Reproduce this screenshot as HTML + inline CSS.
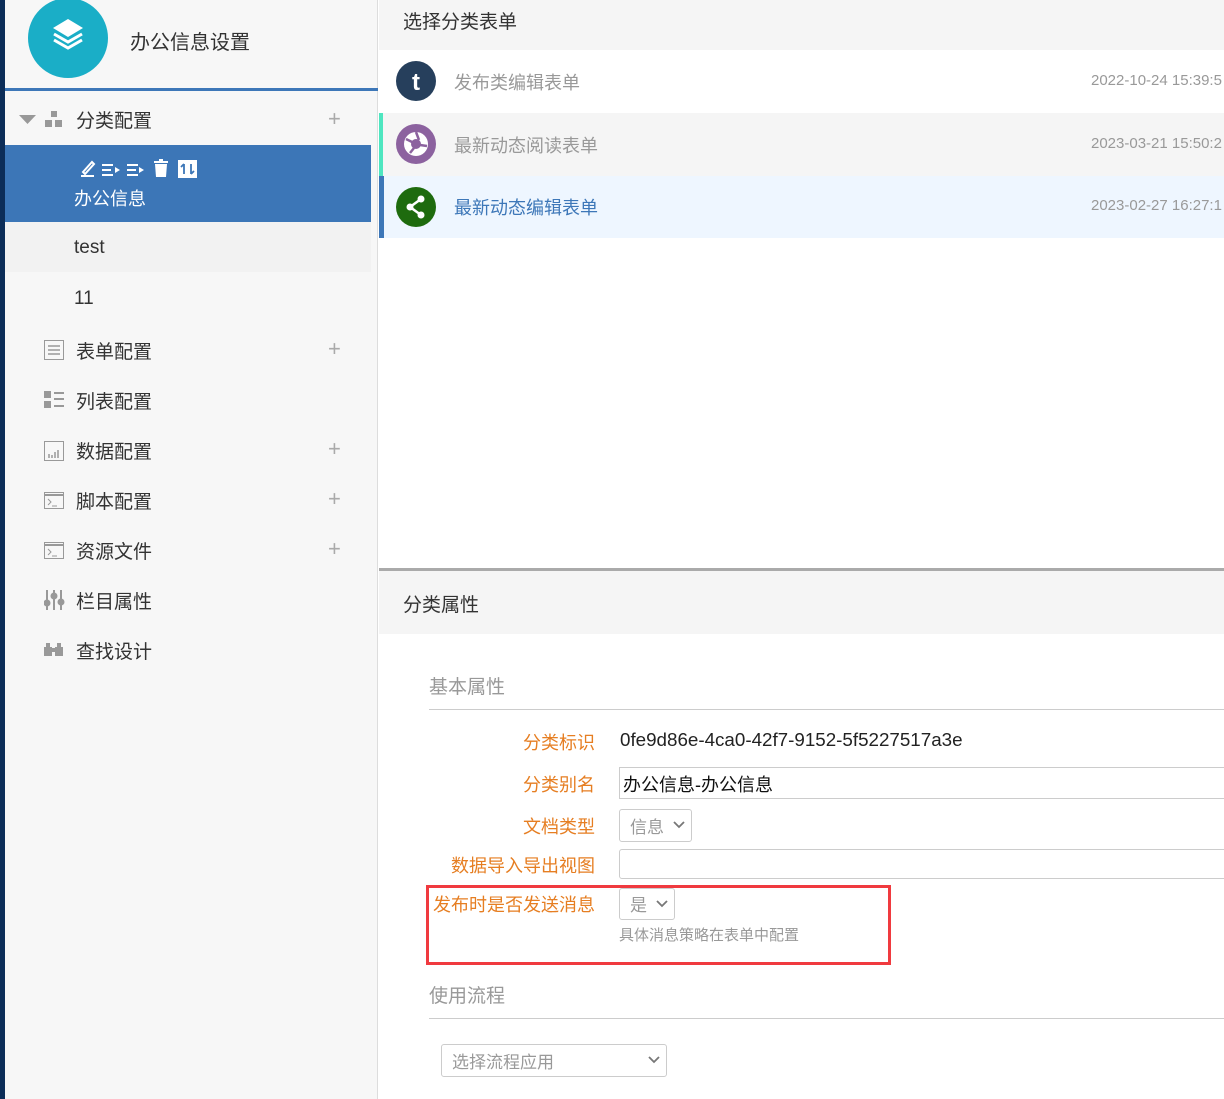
<!DOCTYPE html>
<html><head><meta charset="utf-8"><style>
*{margin:0;padding:0;box-sizing:border-box}
body{width:1224px;height:1099px;overflow:hidden;background:#fff;font-family:"Liberation Sans","Noto Sans CJK SC",sans-serif;position:relative;color:#333}
.a{position:absolute}
.side{left:5px;top:0;width:373px;height:1099px;background:#f7f7f7;border-right:1px solid #ddd}
.nav{left:0;top:0;width:5px;height:1099px;background:#0c2d58}
.it{position:absolute;left:76px;font-size:19px;color:#333}
.ic{position:absolute;left:44px}
.plus{position:absolute;left:328px;font-size:22px;color:#aaa;font-weight:300}
.lab{position:absolute;width:185px;left:410px;text-align:right;font-size:18px;color:#e67e22}
.box{position:absolute;border:1px solid #ccc;border-radius:3px;background:#fff}
</style></head><body>
<div class="a nav"></div>
<div class="a side"></div>
<svg class="a" style="left:28px;top:-2px" width="80" height="80"><circle cx="40" cy="40" r="40" fill="#1aaec7"/>
<path d="M40 21 L55 30 L40 39 L25 30Z" fill="#fff"/><path d="M26 36 L40 44 L54 36 M26 42 L40 50 L54 42" stroke="#fff" stroke-width="3" fill="none"/></svg>
<div class="a" style="left:130px;top:26px;font-size:20px;color:#333">办公信息设置</div>
<div class="a" style="left:5px;top:88px;width:373px;height:3px;background:#3d77b8"></div>
<svg class="a" style="left:19px;top:115px" width="18" height="10"><path d="M0 0 H17 L8.5 9Z" fill="#999"/></svg>
<svg class="a" style="left:45px;top:111px" width="19" height="18"><rect x="6" y="0" width="6" height="6" fill="#999"/><rect x="0" y="9" width="7" height="7" fill="#999"/><rect x="10" y="9" width="7" height="7" fill="#999"/></svg>
<div class="it" style="top:106px">分类配置</div><div class="plus" style="top:106px">+</div>
<div class="a" style="left:5px;top:145px;width:366px;height:77px;background:#3c76b7"></div>
<svg class="a" style="left:79px;top:157px" width="122" height="22" fill="#fff">
<path d="M2 19 H15 M4 15 L13 5 L15 7 L6 17 Z" stroke="#fff" stroke-width="2" fill="none"/>
<path d="M23 8h11M23 13h9M23 18h11" stroke="#fff" stroke-width="2"/><path d="M36 10 L41 13 L36 16Z"/>
<path d="M48 8h11M48 13h9M48 18h11" stroke="#fff" stroke-width="2"/><path d="M60 10 L65 13 L60 16Z"/>
<rect x="75" y="4" width="14" height="2"/><rect x="80" y="2" width="4" height="2"/><path d="M76 7h12l-1 13h-10z"/>
<rect x="99" y="3" width="19" height="18"/><path d="M105 7v10M102 10l3-3M112 17V7M115 14l-3 3" stroke="#3c76b7" stroke-width="1.8" fill="none"/></svg>
<div class="a" style="left:74px;top:185px;font-size:18px;color:#fff">办公信息</div>
<div class="a" style="left:5px;top:222px;width:366px;height:50px;background:#f2f2f2"></div>
<div class="it" style="left:74px;top:237px">test</div>
<div class="it" style="left:74px;top:288px">11</div>
<svg class="ic" style="top:340px" width="21" height="21" fill="none" stroke="#999"><rect x="0.5" y="0.5" width="19" height="19"/><path d="M4 6h12M4 10h12M4 14h12" stroke-width="1.5"/></svg>
<div class="it" style="top:337px">表单配置</div><div class="plus" style="top:336px">+</div>
<svg class="ic" style="top:391px" width="21" height="18" fill="#999"><rect x="0" y="0" width="7" height="7"/><rect x="0" y="10" width="7" height="7"/><path d="M10 2h10M10 8h10M10 15h10" stroke="#999" stroke-width="2"/></svg>
<div class="it" style="top:387px">列表配置</div>
<svg class="ic" style="top:441px" width="21" height="20" fill="none" stroke="#999"><rect x="0.5" y="0.5" width="19" height="19"/><path d="M5 17v-4M8 17v-3M11 17v-6M14 17v-8" stroke-width="1.5"/></svg>
<div class="it" style="top:437px">数据配置</div><div class="plus" style="top:436px">+</div>
<svg class="ic" style="top:492px" width="21" height="18" fill="none" stroke="#999"><rect x="0.5" y="0.5" width="19" height="16"/><path d="M1 3h19" stroke-width="2"/><path d="M4 7l3 3-3 3M8 14h5"/></svg>
<div class="it" style="top:487px">脚本配置</div><div class="plus" style="top:486px">+</div>
<svg class="ic" style="top:542px" width="21" height="18" fill="none" stroke="#999"><rect x="0.5" y="0.5" width="19" height="16"/><path d="M1 3h19" stroke-width="2"/><path d="M4 7l3 3-3 3M8 14h5"/></svg>
<div class="it" style="top:537px">资源文件</div><div class="plus" style="top:536px">+</div>
<svg class="ic" style="top:590px" width="21" height="21" stroke="#999" stroke-width="2" fill="#999"><path d="M3 0v20M10 0v20M17 0v20"/><circle cx="3" cy="13" r="2.5"/><circle cx="10" cy="6" r="2.5"/><circle cx="17" cy="12" r="2.5"/></svg>
<div class="it" style="top:587px">栏目属性</div>
<svg class="ic" style="top:642px" width="20" height="16" fill="#999"><rect x="0" y="5" width="8" height="9"/><rect x="11" y="5" width="8" height="9"/><rect x="2" y="1" width="4" height="5"/><rect x="13" y="1" width="4" height="5"/><rect x="7" y="6" width="5" height="4"/></svg>
<div class="it" style="top:637px">查找设计</div>

<div class="a" style="left:379px;top:0;width:845px;height:50px;background:#f5f5f5"></div>
<div class="a" style="left:403px;top:7px;font-size:19px;color:#333">选择分类表单</div>
<div class="a" style="left:379px;top:113px;width:845px;height:63px;background:#f5f5f5;border-left:4px solid #4ee6c0"></div>
<div class="a" style="left:379px;top:176px;width:845px;height:62px;background:#eef6ff;border-left:5px solid #3d77b8"></div>
<svg class="a" style="left:396px;top:61px" width="40" height="40"><circle cx="20" cy="20" r="20" fill="#263f5c"/><text x="20" y="29" text-anchor="middle" font-size="24" font-weight="bold" fill="#fff" font-family="Liberation Sans">t</text></svg>
<svg class="a" style="left:396px;top:124px" width="40" height="40"><circle cx="20" cy="20" r="20" fill="#8c629f"/><circle cx="20" cy="20" r="12" fill="#fff"/><circle cx="20" cy="20" r="5" fill="#8c629f"/><path d="M20 8 L23 16 M31 22 L24 21 M14 29 L18 24 M10 15 L16 18" stroke="#8c629f" stroke-width="2.5"/></svg>
<svg class="a" style="left:396px;top:187px" width="40" height="40"><circle cx="20" cy="20" r="20" fill="#1e6b0e"/><path d="M25 12 L14 20 L25 28" stroke="#fff" stroke-width="2.5" fill="none"/><circle cx="25" cy="12" r="3.5" fill="#fff"/><circle cx="14" cy="20" r="3.5" fill="#fff"/><circle cx="25" cy="28" r="3.5" fill="#fff"/></svg>
<div class="a" style="left:454px;top:69px;font-size:18px;color:#999">发布类编辑表单</div>
<div class="a" style="left:454px;top:132px;font-size:18px;color:#999">最新动态阅读表单</div>
<div class="a" style="left:454px;top:194px;font-size:18px;color:#3d77b8">最新动态编辑表单</div>
<div class="a" style="left:1091px;top:72px;font-size:15px;color:#999;white-space:nowrap">2022-10-24 15:39:5</div>
<div class="a" style="left:1091px;top:135px;font-size:15px;color:#999;white-space:nowrap">2023-03-21 15:50:2</div>
<div class="a" style="left:1091px;top:197px;font-size:15px;color:#999;white-space:nowrap">2023-02-27 16:27:1</div>

<div class="a" style="left:379px;top:568px;width:845px;height:3px;background:#aaa"></div>
<div class="a" style="left:379px;top:571px;width:845px;height:63px;background:#f5f5f5"></div>
<div class="a" style="left:403px;top:590px;font-size:19px;color:#333">分类属性</div>
<div class="a" style="left:429px;top:672px;font-size:19px;color:#999">基本属性</div>
<div class="a" style="left:429px;top:709px;width:795px;height:1px;background:#ccc"></div>
<div class="lab" style="top:729px">分类标识</div>
<div class="a" style="left:620px;top:729px;font-size:18.8px;color:#222;white-space:nowrap">0fe9d86e-4ca0-42f7-9152-5f5227517a3e</div>
<div class="lab" style="top:771px">分类别名</div>
<div class="box" style="left:619px;top:767px;width:620px;height:32px;border-radius:0"></div>
<div class="a" style="left:623px;top:771px;font-size:18px;color:#111">办公信息-办公信息</div>
<div class="lab" style="top:813px">文档类型</div>
<div class="box" style="left:619px;top:809px;width:73px;height:33px"></div>
<div class="a" style="left:630px;top:813px;font-size:17px;color:#999">信息</div>
<svg class="a" style="left:673px;top:821px" width="12" height="8"><path d="M1 1l5 5 5-5" stroke="#777" stroke-width="1.8" fill="none"/></svg>
<div class="lab" style="top:852px">数据导入导出视图</div>
<div class="box" style="left:619px;top:849px;width:620px;height:30px"></div>
<div class="a" style="left:426px;top:885px;width:465px;height:80px;border:3px solid #f03a3f"></div>
<div class="lab" style="top:891px">发布时是否发送消息</div>
<div class="box" style="left:619px;top:888px;width:56px;height:32px"></div>
<div class="a" style="left:630px;top:891px;font-size:17px;color:#999">是</div>
<svg class="a" style="left:656px;top:900px" width="12" height="8"><path d="M1 1l5 5 5-5" stroke="#777" stroke-width="1.8" fill="none"/></svg>
<div class="a" style="left:619px;top:924px;font-size:15px;color:#999">具体消息策略在表单中配置</div>
<div class="a" style="left:429px;top:981px;font-size:19px;color:#999">使用流程</div>
<div class="a" style="left:429px;top:1018px;width:795px;height:1px;background:#ccc"></div>
<div class="box" style="left:441px;top:1044px;width:226px;height:33px"></div>
<div class="a" style="left:452px;top:1048px;font-size:17px;color:#999">选择流程应用</div>
<svg class="a" style="left:648px;top:1056px" width="12" height="8"><path d="M1 1l5 5 5-5" stroke="#777" stroke-width="1.8" fill="none"/></svg>
</body></html>
